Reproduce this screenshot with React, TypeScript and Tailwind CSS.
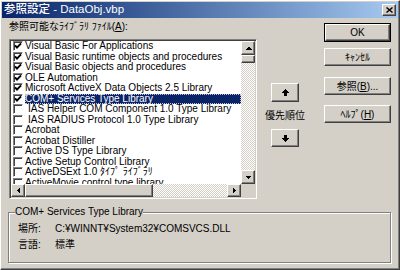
import React from 'react'

const FACE = 'bg-[#d4d0c8]'
const RAISED = 'border border-t-white border-l-white border-r-[#404040] border-b-[#404040] shadow-[inset_-1px_-1px_#808080]'
const TRACK = 'bg-[repeating-conic-gradient(#ffffff_0%_25%,#d4d0c8_0%_50%)] bg-[length:2px_2px]'

type Row = { text: string; checked?: boolean; selected?: boolean; indent?: boolean }

const rows: Row[] = [
  { text: 'Visual Basic For Applications', checked: true },
  { text: 'Visual Basic runtime objects and procedures', checked: true },
  { text: 'Visual Basic objects and procedures', checked: true },
  { text: 'OLE Automation', checked: true },
  { text: 'Microsoft ActiveX Data Objects 2.5 Library', checked: true },
  { text: 'COM+ Services Type Library', checked: true, selected: true },
  { text: 'IAS Helper COM Component 1.0 Type Library', indent: true },
  { text: 'IAS RADIUS Protocol 1.0 Type Library', indent: true },
  { text: 'Acrobat' },
  { text: 'Acrobat Distiller' },
  { text: 'Active DS Type Library' },
  { text: 'Active Setup Control Library' },
  { text: 'ActiveDSExt 1.0 ﾀｲﾌﾟ ﾗｲﾌﾞﾗﾘ' },
  { text: 'ActiveMovie control type library' },
]

function Arrow({ dir }: { dir: 'up' | 'down' | 'left' | 'right' }) {
  const pts = {
    up: '0,4 7,4 3.5,0.5',
    down: '0,0.5 7,0.5 3.5,4',
    left: '4,0 4,7 0.5,3.5',
    right: '0.5,0 0.5,7 4,3.5',
  }[dir]
  const vertical = dir === 'up' || dir === 'down'
  return (
    <svg width={vertical ? 7 : 5} height={vertical ? 5 : 7} viewBox={vertical ? '0 0 7 5' : '0 0 5 7'}>
      <polygon points={pts} fill="black" shapeRendering="crispEdges" />
    </svg>
  )
}

// arrow with a stem, used on the priority buttons
function StemArrow({ down }: { down?: boolean }) {
  return (
    <svg width="8" height="7" viewBox="0 0 8 7" className={down ? 'rotate-180' : ''}>
      <polygon points="4,0 8,4 5.5,4 5.5,7 2.5,7 2.5,4 0,4" fill="black" shapeRendering="crispEdges" />
    </svg>
  )
}

function CheckBox({ checked }: { checked?: boolean }) {
  return (
    <div className="w-[10px] h-[10px] shrink-0 bg-white border border-t-[#808080] border-l-[#808080] border-r-white border-b-white shadow-[inset_1px_1px_#404040] flex items-center justify-center">
      {checked && (
        <svg width="8" height="8" viewBox="0 0 8 8">
          <path d="M1 3.3 L3 5.6 L7 1.4" stroke="black" strokeWidth="2" fill="none" />
        </svg>
      )}
    </div>
  )
}

function Btn({ children, def, className }: { children: React.ReactNode; def?: boolean; className?: string }) {
  const inner = (
    <div className={`${RAISED} ${FACE} flex items-center justify-center w-full h-full`}>{children}</div>
  )
  if (def) return <div className={`border border-black ${className ?? ''}`}>{inner}</div>
  return <div className={className}>{inner}</div>
}

function ListBox() {
  return (
    <div className="mt-[6px] w-[248px] h-[160px] bg-white border border-t-[#808080] border-l-[#808080] border-r-white border-b-white shadow-[inset_1px_1px_#404040,inset_-1px_-1px_#d4d0c8] p-[1px] flex flex-col">
      <div className="flex flex-1 min-h-0">
        <div className="flex-1 overflow-hidden pl-[2px] text-[10px]">
          {rows.map(r => (
            <div key={r.text} className="h-[10.5px] flex items-center">
              <CheckBox checked={r.checked} />
              <div
                className={`ml-[2px] flex-1 leading-[10.5px] h-[10.5px] whitespace-nowrap ${r.indent ? 'pl-[3px]' : ''} ${
                  r.selected ? 'bg-[#0a246a] text-white outline outline-1 outline-dotted outline-offset-[-1px] outline-[#c0c0c0]' : ''
                }`}
              >
                {r.text}
              </div>
            </div>
          ))}
        </div>
        <div className="w-[14px] flex flex-col">
          <div className={`${RAISED} ${FACE} h-[14px] flex items-center justify-center`}><Arrow dir="up" /></div>
          <div className={`${RAISED} ${FACE} h-[8px]`} />
          <div className={`flex-1 ${TRACK}`} />
          <div className={`${RAISED} ${FACE} h-[14px] flex items-center justify-center`}><Arrow dir="down" /></div>
        </div>
      </div>
      <div className="h-[13px] flex">
        <div className={`${RAISED} ${FACE} w-[14px] flex items-center justify-center`}><Arrow dir="left" /></div>
        <div className={`${RAISED} ${FACE} w-[128px]`} />
        <div className={`flex-1 ${TRACK}`} />
        <div className={`${RAISED} ${FACE} w-[14px] flex items-center justify-center`}><Arrow dir="right" /></div>
        <div className={`w-[14px] ${FACE}`} />
      </div>
    </div>
  )
}

export default function App() {
  return (
    <div className={`w-[400px] h-[270px] ${FACE} border border-t-white border-l-white border-r-[#404040] border-b-[#404040] shadow-[inset_-1px_-1px_#808080] p-[1px] flex flex-col text-black font-['Liberation_Sans','Noto_Sans_CJK_JP',sans-serif] text-[10px] select-none overflow-hidden`}>
      <div className="h-[16px] shrink-0 bg-linear-to-r from-[#0a246a] to-[#a6caf0] flex items-center pl-[2px] pr-[2px]">
        <span className="text-white font-medium text-[11.5px] leading-none">参照設定 - DataObj.vbp</span>
        <div className={`ml-auto w-[14px] h-[12px] ${RAISED} ${FACE} flex items-center justify-center`}>
          <svg width="7" height="6" viewBox="0 0 7 6">
            <path d="M0.5 0.5 L6.5 5.5 M6.5 0.5 L0.5 5.5" stroke="black" strokeWidth="1.4" />
          </svg>
        </div>
      </div>

      <div className="flex items-start">
        <div className="ml-[7px] flex flex-col">
          <div className="mt-[3px] leading-[12px] h-[12px]">
            参照可能なﾗｲﾌﾞﾗﾘ ﾌｧｲﾙ(<span className="underline">A</span>):
          </div>
          <ListBox />
        </div>

        <div className="ml-[6px] w-[44px] flex flex-col items-center">
          <Btn className="mt-[65px] w-[28px] h-[19px]"><StemArrow /></Btn>
          <div className="mt-[7px] leading-[13px] h-[13px] whitespace-nowrap">優先順位</div>
          <Btn className="mt-[7px] w-[28px] h-[18px]"><StemArrow down /></Btn>
        </div>

        <div className="ml-[17px] w-[67px] flex flex-col">
          <Btn def className="mt-[5px] h-[19px]">OK</Btn>
          <Btn className="mt-[6px] h-[18px]">ｷｬﾝｾﾙ</Btn>
          <Btn className="mt-[11px] h-[18px]">
            <span>参照(<span className="underline">B</span>)...</span>
          </Btn>
          <Btn className="mt-[10px] h-[18px]">
            <span>ﾍﾙﾌﾟ(<span className="underline">H</span>)</span>
          </Btn>
        </div>
      </div>

      <fieldset className="mt-[7px] ml-[6px] w-[383px] h-[57px] border border-[#808080] shadow-[inset_1px_1px_white,1px_1px_white] pl-[6px]">
        <legend className={`${FACE} leading-[12px] px-0`}>COM+ Services Type Library</legend>
        <div className="ml-[3px] mt-[4px] flex leading-[14px]">
          <span className="w-[37px]">場所:</span>
          <span>C:¥WINNT¥System32¥COMSVCS.DLL</span>
        </div>
        <div className="ml-[3px] mt-[2px] flex leading-[14px]">
          <span className="w-[37px]">言語:</span>
          <span>標準</span>
        </div>
      </fieldset>
    </div>
  )
}
